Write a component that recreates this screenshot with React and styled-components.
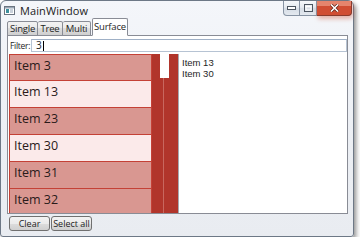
import React from "react";
import styled, { createGlobalStyle } from "styled-components";

const GlobalStyle = createGlobalStyle`
  html, body {
    margin: 0;
    padding: 0;
    background: #ffffff;
  }
  body {
    font-family: "Open Sans", "Noto Sans", "Liberation Sans", sans-serif;
    color: #1e1e1e;
  }
  * { box-sizing: border-box; }
`;

const Window = styled.div`
  width: 354px;
  height: 237px;
  display: flex;
  flex-direction: column;
  border: 1px solid #6d7886;
  border-radius: 6px 6px 3px 3px;
  background: linear-gradient(180deg, #f4f6fa 0%, #eceff4 60%, #e9ecf1 100%);
  box-shadow: 2px 3px 5px rgba(0, 0, 0, 0.45);
  padding: 0 5px 5px 6px;
`;

const TitleBar = styled.div`
  height: 17px;
  display: flex;
  align-items: flex-start;
  margin-right: -4px;
  margin-left: -4px;
`;

const AppIcon = styled.svg`
  margin: 5px 5px 0 1px;
  flex: none;
`;

const Title = styled.div`
  font-size: 11px;
  line-height: 12px;
  margin-top: 4px;
  color: #1b1b1b;
  letter-spacing: 0.1px;
`;

const Caption = styled.div`
  margin-left: auto;
  display: flex;
  flex: none;
  width: 69px;
  height: 15px;
`;

const CaptionButton = styled.div`
  flex: none;
  width: 17px;
  height: 15px;
  display: flex;
  align-items: center;
  justify-content: center;
  border-style: solid;
  border-color: #8793a3;
  border-width: 0 1px 1px ${p => (p.$first ? 1 : 0)}px;
  border-radius: ${p => (p.$first ? "0 0 0 4px" : "0")};
  background: linear-gradient(180deg, #f6f8fb 0%, #e5eaf0 45%, #d6dde6 55%, #e4e9ef 100%);
`;

const CloseButton = styled.div`
  flex: none;
  width: 35px;
  height: 15px;
  display: flex;
  align-items: center;
  justify-content: center;
  background-color: #d04d33;
  border: 1px solid #8a3a2c;
  border-top: none;
  border-left: none;
  border-radius: 0 0 4px 0;
  box-shadow: inset 0 6px 0 -1px rgba(255, 200, 180, 0.45), 1px 3px 4px rgba(205, 80, 55, 0.4);
`;

const Client = styled.div`
  flex: 1;
  display: flex;
  flex-direction: column;
  min-height: 0;
`;

const TabStrip = styled.div`
  display: flex;
  align-items: flex-end;
  height: 18px;
  position: relative;
  z-index: 1;
  margin-bottom: -1px;
`;

const Tab = styled.div`
  flex: none;
  width: ${p => p.$w}px;
  height: ${p => (p.$active ? 18 : 15)}px;
  text-align: center;
  font-size: 9.5px;
  line-height: ${p => (p.$active ? 16 : 13)}px;
  border: 1px solid #898c95;
  border-bottom: ${p => (p.$active ? "1px solid #ffffff" : "1px solid #898c95")};
  border-left-width: ${p => (p.$first || p.$active ? 1 : 0)}px;
  border-radius: 2px 2px 0 0;
  background: ${p =>
    p.$active ? "#ffffff" : "linear-gradient(180deg, #f2f2f2 0%, #ebebeb 50%, #dddddd 50%, #cfcfcf 100%)"};
  color: #1e1e1e;
  margin-left: ${p => (p.$active ? 1 : 0)}px;
  white-space: nowrap;
  letter-spacing: -0.2px;
`;

const Panel = styled.div`
  height: 179px;
  border: 1px solid #898c95;
  background: #ffffff;
  padding: 3px 0 0 1px;
  display: flex;
  flex-direction: column;
`;

const FilterRow = styled.div`
  display: flex;
  align-items: center;
  height: 13px;
`;

const Label = styled.span`
  flex: none;
  font-size: 8.5px;
  line-height: 13px;
  letter-spacing: -0.3px;
  padding: 0 1px 0 1px;
  white-space: nowrap;
  color: #1e1e1e;
`;

const TextBox = styled.div`
  flex: 1;
  height: 13px;
  border: 1px solid #b6c3d3;
  border-top-color: #9fb0c6;
  background: #ffffff;
  display: flex;
  align-items: center;
  padding-left: 4px;
  font-size: 10px;
  line-height: 11px;
`;

const Caret = styled.span`
  width: 1px;
  height: 10px;
  background: #000;
  margin-left: 1px;
`;

const Content = styled.div`
  flex: 1;
  display: flex;
  margin-top: 2px;
  min-height: 0;
`;

const List = styled.div`
  width: 143px;
  display: flex;
  flex-direction: column;
  overflow: hidden;
`;

const Item = styled.div`
  flex: none;
  height: 27px;
  border: 1px solid #c44136;
  border-top-width: ${p => (p.$first ? 1 : 0)}px;
  background: ${p => (p.$selected ? "#d99791" : "#fbeaea")};
  font-size: 12.5px;
  line-height: 22px;
  padding-left: 4px;
  color: #2a1a1a;
`;

const ScrollBar = styled.div`
  width: 26px;
  background: #b1352b;
  position: relative;
  &::before {
    content: "";
    position: absolute;
    left: 11px;
    top: 0;
    bottom: 0;
    width: 1px;
    background: #c8675e;
  }
`;

const Thumb = styled.div`
  position: absolute;
  left: 8px;
  top: 0;
  width: 9px;
  height: 24px;
  background: #ffffff;
`;

const Output = styled.div`
  flex: 1;
  border-left: 1px solid #a6a9b0;
  padding: 3px 0 0 3px;
  font-family: "Liberation Sans", Arial, sans-serif;
  font-size: 9.5px;
  line-height: 11px;
  color: #1e1e1e;
`;

const OutputLine = styled.div`
  height: 11px;
  white-space: nowrap;
`;

const ButtonRow = styled.div`
  display: flex;
  padding: 2px 0 0 2px;
`;

const Button = styled.div`
  width: ${p => p.$w}px;
  height: 15px;
  border: 1px solid #707070;
  border-radius: 3px;
  background: linear-gradient(180deg, #f2f2f2 0%, #ebebeb 50%, #dddddd 50%, #cfcfcf 100%);
  font-size: 9px;
  line-height: 13px;
  text-align: center;
  white-space: nowrap;
  color: #1e1e1e;
  margin-right: 1px;
`;

const items = [
  { label: "Item 3", selected: true },
  { label: "Item 13", selected: false },
  { label: "Item 23", selected: true },
  { label: "Item 30", selected: false },
  { label: "Item 31", selected: true },
  { label: "Item 32", selected: true },
];

const tabs = [
  { label: "Single", w: 31 },
  { label: "Tree", w: 25 },
  { label: "Multi", w: 28 },
  { label: "Surface", w: 36, active: true },
];

export default function App() {
  return (
    <>
      <GlobalStyle />
      <Window>
        <TitleBar>
          <AppIcon width="11" height="9" viewBox="0 0 11 9">
            <rect x="0.5" y="0.5" width="10" height="8" fill="#ffffff" stroke="#6b7480" />
            <rect x="1" y="1" width="9" height="1.5" fill="#9aa6b4" />
            <rect x="2" y="3" width="3" height="4" fill="#3d8f9c" />
            <rect x="6" y="3" width="3" height="4" fill="#c9d1da" />
          </AppIcon>
          <Title>MainWindow</Title>
          <Caption>
            <CaptionButton $first>
              <svg width="9" height="4" viewBox="0 0 9 4">
                <rect x="0.5" y="0.5" width="8" height="3" fill="#ffffff" stroke="#4c5560" />
              </svg>
            </CaptionButton>
            <CaptionButton>
              <svg width="9" height="8" viewBox="0 0 9 8">
                <rect x="0.5" y="0.5" width="8" height="7" fill="none" stroke="#4c5560" />
                <rect x="2" y="2.5" width="5" height="3.5" fill="none" stroke="#ffffff" />
              </svg>
            </CaptionButton>
            <CloseButton>
              <svg width="9" height="8" viewBox="0 0 9 8">
                <path d="M1 0.5 L8 7.5 M8 0.5 L1 7.5" stroke="#5a1e14" strokeWidth="3" />
                <path d="M1 0.5 L8 7.5 M8 0.5 L1 7.5" stroke="#ffffff" strokeWidth="1.6" />
              </svg>
            </CloseButton>
          </Caption>
        </TitleBar>
        <Client>
          <TabStrip>
            {tabs.map((t, i) => (
              <Tab key={t.label} $w={t.w} $first={i === 0} $active={t.active}>
                {t.label}
              </Tab>
            ))}
          </TabStrip>
          <Panel>
            <FilterRow>
              <Label>Filter:</Label>
              <TextBox>
                3<Caret />
              </TextBox>
            </FilterRow>
            <Content>
              <List>
                {items.map((it, i) => (
                  <Item key={it.label} $first={i === 0} $selected={it.selected}>
                    {it.label}
                  </Item>
                ))}
              </List>
              <ScrollBar>
                <Thumb />
              </ScrollBar>
              <Output>
                <OutputLine>Item 13</OutputLine>
                <OutputLine>Item 30</OutputLine>
              </Output>
            </Content>
          </Panel>
          <ButtonRow>
            <Button $w={41}>Clear</Button>
            <Button $w={41}>Select all</Button>
          </ButtonRow>
        </Client>
      </Window>
    </>
  );
}
